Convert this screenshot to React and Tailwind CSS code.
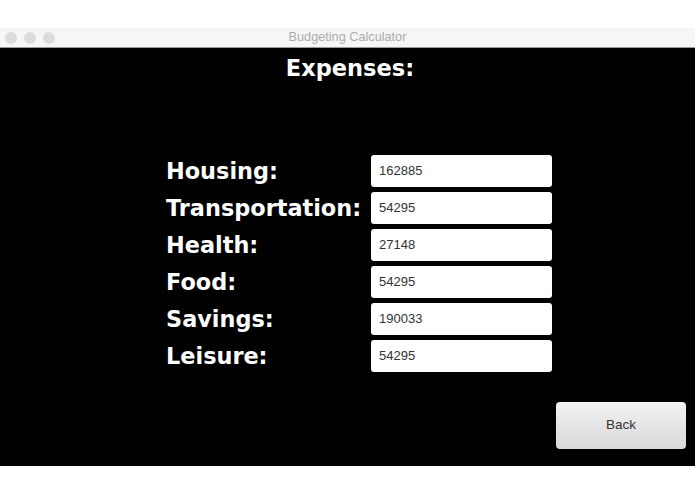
const rows = [
  ['Housing:', '162885'],
  ['Transportation:', '54295'],
  ['Health:', '27148'],
  ['Food:', '54295'],
  ['Savings:', '190033'],
  ['Leisure:', '54295'],
]

const sans = { fontFamily: '"Liberation Sans", Arial, sans-serif' }

export default function App() {
  return (
    <div className="w-[695px] h-[494px] bg-white flex flex-col" style={sans}>
      <div className="h-[28px]" />
      {/* Title bar */}
      <div className="h-[20px] bg-[#f6f6f6] border-b border-[#9a9a9a] flex items-center relative">
        <div className="flex gap-[7px] pl-[5px]">
          <div className="w-[12px] h-[12px] rounded-full bg-[#dcdcdc]" />
          <div className="w-[12px] h-[12px] rounded-full bg-[#dcdcdc]" />
          <div className="w-[12px] h-[12px] rounded-full bg-[#dcdcdc]" />
        </div>
        <div className="absolute inset-0 flex items-center justify-center text-[12.7px] text-[#ababab]">
          Budgeting Calculator
        </div>
      </div>

      {/* Content */}
      <div className="h-[418px] bg-black flex flex-col text-white" style={{ fontFamily: '"DejaVu Sans", Verdana, sans-serif' }}>
        <div className="text-center text-[22.5px] font-bold pt-[6px] pl-[5px] leading-[28px]">Expenses:</div>

        <div className="flex flex-col gap-[6px] mt-[73px] ml-[166px]">
          {rows.map(([label, value]) => (
            <div key={label} className="flex items-center h-[31px]">
              <div className="w-[205px] text-[22.4px] font-bold leading-none pt-[1px]">{label}</div>
              <div className="w-[181px] h-[32px] bg-white rounded-[3px] flex items-center pl-[8px] text-[13px] text-[#333]" style={sans}>
                {value}
              </div>
            </div>
          ))}
        </div>

        <div className="flex justify-end pr-[9px] mt-[31px]">
          <div className="w-[130px] h-[47px] rounded-[4px] bg-gradient-to-b from-[#f2f2f2] to-[#d9d9d9] flex items-center justify-center text-[13.5px] text-[#333]" style={sans}>
            Back
          </div>
        </div>
      </div>
    </div>
  )
}
